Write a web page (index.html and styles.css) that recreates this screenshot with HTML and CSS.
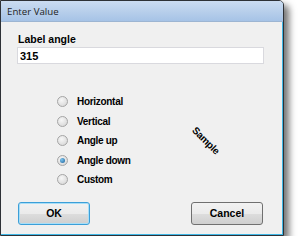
FILE: index.html
```html
<!DOCTYPE html>
<html lang="en">
<head>
    <meta charset="UTF-8">
    <title>Enter Value</title>
    <link rel="stylesheet" href="styles.css">
</head>
<body>
    <div class="dialog">
        <div class="titlebar">Enter Value</div>
        <div class="content">
            <label class="field-label" for="angle">Label angle</label>
            <input class="field" id="angle" type="text" value="315">

            <div class="options">
                <div class="radios">
                    <label class="radio"><input type="radio" name="mode"><span class="dot"></span>Horizontal</label>
                    <label class="radio"><input type="radio" name="mode"><span class="dot"></span>Vertical</label>
                    <label class="radio"><input type="radio" name="mode"><span class="dot"></span>Angle up</label>
                    <label class="radio"><input type="radio" name="mode" checked><span class="dot"></span>Angle down</label>
                    <label class="radio"><input type="radio" name="mode"><span class="dot"></span>Custom</label>
                </div>
                <div class="sample-box">
                    <span class="sample">Sample</span>
                </div>
            </div>

            <div class="buttons">
                <button class="btn default">OK</button>
                <button class="btn">Cancel</button>
            </div>
        </div>
    </div>
</body>
</html>
```

FILE: styles.css
```css
body {
    margin: 0;
    background-color: white;
    font-family: "Liberation Sans", Arial, sans-serif;
}
.dialog {
    width: 282px;
    height: 234px;
    border: 1px solid #2e3136;
    border-radius: 0 5px 0 0;
    background-color: #f0f0f0;
    box-shadow: inset -1px -1px 0 #3fb7e6, 5px 5px 7px rgba(0, 0, 0, 0.55);
    display: flex;
    flex-direction: column;
}
.titlebar {
    height: 20px;
    line-height: 22px;
    padding-left: 6px;
    font-family: "Open Sans", "Noto Sans", sans-serif;
    font-size: 9.7px;
    color: #1e1e1e;
    background: linear-gradient(#cbdcf1, #a6c3e6);
    border-radius: 0 4px 0 0;
    border-bottom: 1px solid #9db5d2;
}
.content {
    display: flex;
    flex-direction: column;
    padding: 10px 20px 0 16px;
}
.field-label {
    font-size: 10.5px;
    font-weight: bold;
    line-height: 14px;
    padding-left: 1px;
}
.field {
    margin-top: 1px;
    width: 247px;
    height: 17px;
    box-sizing: border-box;
    border: 1px solid #d9d9de;
    background-color: white;
    padding: 0 2px;
    font-family: "Liberation Sans", Arial, sans-serif;
    font-size: 11px;
    font-weight: bold;
    color: black;
    outline: none;
}
.options {
    display: flex;
    align-items: center;
    margin-top: 28px;
    padding-left: 40px;
}
.radios {
    width: 119px;
    display: grid;
    grid-auto-rows: 19.5px;
}
.radio {
    display: flex;
    align-items: center;
    font-size: 10px;
    font-weight: bold;
    letter-spacing: -0.3px;
}
.radio input {
    display: none;
}
.dot {
    width: 9px;
    height: 9px;
    margin-right: 9px;
    border: 1px solid #a5a5a5;
    border-radius: 50%;
    background: radial-gradient(circle at 40% 35%, #f7f7f7, #d2d2d2);
    position: relative;
}
input:checked + .dot:before {
    position: absolute;
    content: "";
    left: 2px;
    top: 2px;
    width: 5px;
    height: 5px;
    border-radius: 50%;
    background: radial-gradient(circle at 35% 35%, #7cc4ee, #1a5f98);
}
.sample-box {
    width: 60px;
    display: flex;
    justify-content: center;
}
.sample {
    font-size: 10px;
    font-weight: bold;
    letter-spacing: -0.3px;
    transform: rotate(45deg);
}
.buttons {
    display: flex;
    justify-content: space-between;
    margin-top: 12px;
    padding-left: 1px;
    width: 245px;
}
.btn {
    width: 72px;
    height: 23px;
    border: 1px solid #707070;
    border-radius: 3px;
    background: linear-gradient(#f2f2f2 0%, #ebebeb 50%, #dddddd 51%, #cfcfcf 100%);
    font-family: "Liberation Sans", Arial, sans-serif;
    font-size: 10.5px;
    font-weight: bold;
    color: black;
    padding: 0;
}
.default {
    border-color: #3c9fd8;
    box-shadow: inset 0 0 0 1px #a8def7;
}
```
